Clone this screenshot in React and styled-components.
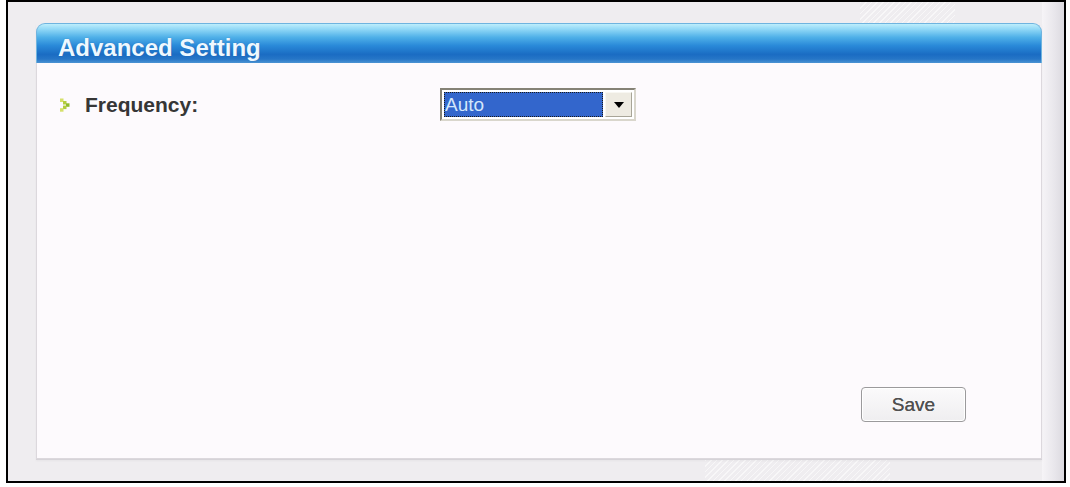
import React from "react";
import styled, { createGlobalStyle } from "styled-components";

const Global = createGlobalStyle`
  html, body { margin: 0; padding: 0; background: #ffffff; }
  body { font-family: "Liberation Sans", Arial, sans-serif; }
`;

const Frame = styled.div`
  box-sizing: border-box;
  margin-left: 6px;
  width: 1060px;
  height: 483px;
  border: 2px solid #000;
  padding: 21px 0 0 28px;
  background-color: #efedf0;
  background-image:
    repeating-linear-gradient(135deg, rgba(255,255,255,0.55) 0 1px, transparent 1px 4px),
    repeating-linear-gradient(135deg, rgba(255,255,255,0.55) 0 1px, transparent 1px 4px),
    linear-gradient(to right, transparent 0, transparent 1034px, #f6f4f7 1034px, #e9e7ec 1046px, #dcdae0 1056px);
  background-size: 95px 21px, 185px 21px, 100% 100%;
  background-position: 852px 0, 697px 458px, 0 0;
  background-repeat: no-repeat;
`;

const Panel = styled.section`
  width: 1006px;
  height: 436px;
  display: flex;
  flex-direction: column;
  box-shadow: 0 1px 0 #d6d3d8, 0 2px 2px rgba(0, 0, 0, 0.04);
`;

const TitleBar = styled.header`
  box-sizing: border-box;
  height: 40px;
  padding: 12px 0 0 21px;
  border-radius: 9px 9px 0 0;
  background: linear-gradient(
    to bottom,
    #bdeefc 0%,
    #8fd7f6 14%,
    #4fb0e8 34%,
    #2a8ad9 55%,
    #1a6cc3 78%,
    #2676c7 90%,
    #4b93d3 100%
  );
  border: 1px solid #6fb4df;
  border-bottom: none;
`;

const Title = styled.h1`
  margin: 0;
  font-family: "Liberation Sans", Arial, sans-serif;
  font-size: 24px;
  font-weight: bold;
  line-height: 1;
  color: #eef8ff;
  text-shadow: 0 0 1px rgba(0, 40, 100, 0.35);
`;

const Body = styled.div`
  flex: 1;
  box-sizing: border-box;
  display: flex;
  flex-direction: column;
  justify-content: space-between;
  padding: 25px 75px 36px 23px;
  background: #fdfafd;
  border: 1px solid #dcd8dd;
  border-top: none;
`;

const Row = styled.div`
  display: flex;
  align-items: center;
  height: 33px;
`;

const Bullet = styled.svg`
  width: 10px;
  height: 14px;
  flex: none;
  margin-right: 15px;
`;

const Label = styled.span`
  width: 355px;
  font-family: "Liberation Sans", Arial, sans-serif;
  font-size: 21px;
  font-weight: bold;
  color: #363636;
  margin-top: 1px;
`;

const SelectBox = styled.div`
  box-sizing: border-box;
  width: 196px;
  height: 33px;
  display: flex;
  align-items: stretch;
  padding: 2px;
  border-top: 2px solid #858276;
  border-left: 2px solid #858276;
  border-right: 2px solid #d9d6cc;
  border-bottom: 2px solid #d9d6cc;
  background: #ffffff;
`;

const SelectValue = styled.div`
  flex: 1;
  box-sizing: border-box;
  background: #3366cc;
  outline: 1px dotted #1a1a1a;
  outline-offset: -1px;
  color: #d4e6fb;
  font-family: "Liberation Sans", Arial, sans-serif;
  font-size: 19px;
  line-height: 25px;
  padding-left: 1px;
`;

const DropButton = styled.div`
  width: 27px;
  margin-left: 2px;
  box-sizing: border-box;
  display: flex;
  align-items: center;
  justify-content: center;
  background: #eeebe2;
  border-top: 1px solid #f8f7f2;
  border-left: 1px solid #f8f7f2;
  border-right: 1px solid #a8a598;
  border-bottom: 1px solid #a8a598;
`;

const Footer = styled.div`
  display: flex;
  justify-content: flex-end;
`;

const SaveButton = styled.button`
  box-sizing: border-box;
  width: 105px;
  height: 35px;
  border: 1px solid #9b9a9c;
  border-radius: 4px;
  background: linear-gradient(to bottom, #fbfafb, #efeef0);
  box-shadow: inset 0 0 0 1px #ffffff;
  color: #505050;
  font-family: "Liberation Sans", Arial, sans-serif;
  font-size: 19px;
  padding: 0;
  cursor: pointer;
  text-shadow: 0 0 0.6px #505050;
`;

export default function App() {
  return (
    <>
      <Global />
      <Frame>
        <Panel>
          <TitleBar>
            <Title>Advanced Setting</Title>
          </TitleBar>
          <Body>
            <Row>
              <Bullet viewBox="0 0 10 14">
                <rect x="0" y="0.5" width="3.5" height="3.5" fill="#d5e06a" />
                <rect x="3" y="3" width="3.5" height="3.5" fill="#b3cd3e" />
                <rect x="6" y="5.3" width="3.5" height="3.5" fill="#8fbb2c" />
                <rect x="3" y="7.6" width="3.5" height="3.5" fill="#b3cd3e" />
                <rect x="0" y="10.2" width="3.5" height="3.5" fill="#d5e06a" />
              </Bullet>
              <Label>Frequency:</Label>
              <SelectBox>
                <SelectValue>Auto</SelectValue>
                <DropButton>
                  <svg width="10" height="6" viewBox="0 0 10 6">
                    <path d="M0 0 H10 L5 6 Z" fill="#000" />
                  </svg>
                </DropButton>
              </SelectBox>
            </Row>
            <Footer>
              <SaveButton>Save</SaveButton>
            </Footer>
          </Body>
        </Panel>
      </Frame>
    </>
  );
}
